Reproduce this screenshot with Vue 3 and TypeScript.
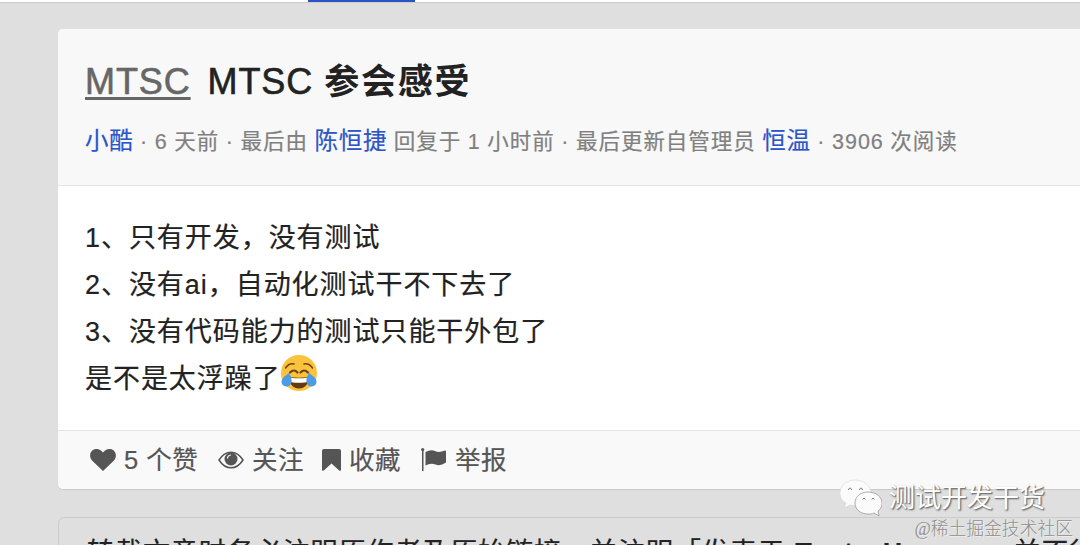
<script setup lang="ts">
const lines: string[] = ['1、只有开发，没有测试', '2、没有ai，自动化测试干不下去了', '3、没有代码能力的测试只能干外包了']
</script>

<template>
  <div class="page">
    <header class="nav"><span class="tab"></span></header>
    <main class="content">
      <article class="card">
        <div class="head">
          <h1><a class="node">MTSC</a><span class="name">MTSC</span><b>参会感受</b></h1>
          <div class="meta">
            <a>小酷</a> · 6 天前 · 最后由 <a>陈恒捷</a> 回复于 1 小时前 · 最后更新自管理员 <a>恒温</a> · 3906 次阅读
          </div>
        </div>
        <div class="body">
          <p v-for="line in lines" :key="line">{{ line }}</p>
          <p class="last">是不是太浮躁了<svg class="emoji" viewBox="0 0 36 36">
            <circle cx="18" cy="18" r="18" fill="#fbc33b" />
            <path d="M4.500 13Q8 8 13 9M23 9q5-1 8.500 4" fill="none" stroke="#70431a" stroke-width="1.500" stroke-linecap="round" />
            <path d="M9 17.500q4-4 7.500 0M19.500 17.500q3.500-4 7.500 0" fill="none" stroke="#70431a" stroke-width="2.200" stroke-linecap="round" />
            <path d="M8 21.500q10 2.500 20 0c0 6-3 12-10 12s-10-6-10-12z" fill="#633a12" />
            <path d="M9.500 22.500q8.500 1.700 17 0v3.500q0 1-1 1.200-7.500 1.200-15 0-1-.2-1-1.200z" fill="#fff" />
            <path d="M8 18c2 4 4 8 1.500 11.500-2 3-7 2.500-8.500-.5C-1 24 4 21 8 18zM28 18c-2 4-4 8-1.500 11.500 2 3 7 2.500 8.500-.5 2-5-3-8-7-11z" fill="#4a9be8" />
          </svg></p>
        </div>
        <footer class="actions">
          <span class="action like"><svg width="26" height="22" viewBox="0 0 26 22"><path d="M13 22 2 11.500C-3.500 4.500 4-3.500 11 1.500l2 2 2-2c7-5 14.500 3 9 10z" /></svg>5 个赞</span>
          <span class="action watch"><svg width="26" height="18" viewBox="0 0 26 18"><path d="M1 9Q6 1.200 13 1.200T25 9Q20 16.800 13 16.800T1 9z" fill="none" stroke="currentColor" stroke-width="1.500" /><circle cx="13" cy="8" r="6.500" /><path d="M9.500 7.500Q9.500 4.500 13 4" fill="none" stroke="#f9f9f9" stroke-width="1.200" /></svg>关注</span>
          <span class="action save"><svg width="19" height="22" viewBox="0 0 19 22"><path d="M2 0h15q2 0 2 2v18.500q0 2-1.800 1L9.500 14.500 1.800 21.500Q0 22.500 0 20.500V2Q0 0 2 0z" /></svg>收藏</span>
          <span class="action report"><svg width="26" height="23" viewBox="0 0 26 23"><path d="M1 1.500h1.500V23H1z" /><circle cx="1.700" cy="1.600" r="1.600" /><path d="M4.500 4Q10 1 14 3t10-.5q1 0 1 1V14.500q-6 4-10.500 2-5-2-10 1z" /></svg>举报</span>
        </footer>
      </article>
      <section class="notice">转载文章时务必注明原作者及原始链接，并注明「发表于 <b>TesterHome</b>」，并不得</section>
    </main>
    <div class="wechat">
      <svg width="42" height="38" viewBox="0 0 42 38">
        <path d="M15 1C6 1 0 7 0 14c0 5 2 8 6 10l-2 5 6-3c13 3 21-3 21-12C31 7 24 1 15 1z" fill="#fbfbfb" stroke="#ccc" stroke-width=".5" />
        <path d="M28 13c-8 0-13 5-13 11s5 11 13 11c2 0 4 0 6-1l5 3-1-5c3-2 4-5 4-8 0-6-6-11-14-11z" fill="#fbfbfb" stroke="#999" stroke-width=".8" />
        <path d="M8.300 11q1.700-4 3.400 0M19.300 11q1.700-4 3.400 0M22.700 20.500q1.300-3 2.600 0M31.700 20.500q1.300-3 2.600 0" fill="none" stroke="#777" stroke-width="1" />
      </svg>
      <span>测试开发干货</span>
    </div>
    <div class="credit">@稀土掘金技术社区</div>
  </div>
</template>

<style>
body { overflow: hidden; }
</style>

<style scoped>
.page { position: relative; height: 545px; overflow: hidden; background: #dfdfdf; font-family: "Liberation Sans", "Noto Sans CJK SC", sans-serif; color: #222; white-space: nowrap; }
.nav { height: 2px; background: #fff; box-shadow: 0 1px 1px #cbcbcb; padding-left: 308px; }
.tab { display: block; width: 107px; height: 2px; background: #2c52c4; }
.content { margin: 27px -110px 0 58px; }
.card { box-sizing: border-box; height: 460px; border-radius: 5px; background: #fff; overflow: hidden; box-shadow: 0 1px 1px #c8c8c8; }
.head { box-sizing: border-box; height: 157px; padding: 27px 27px 0; background: #f8f8f8; border-bottom: 1px solid #e4e4e4; }
h1 { display: flex; margin: 0; height: 50px; line-height: 52px; font-size: 36px; font-weight: 400; letter-spacing: .9px; -webkit-text-stroke: .6px; }
.node { color: #666; text-decoration: underline; text-decoration-thickness: 3px; text-underline-offset: 3px; margin-right: 17px; }
.name { margin-right: 11px; }
h1 b { font-size: 35px; font-weight: 700; letter-spacing: 1.8px; -webkit-text-stroke: 0; }
.meta { margin-top: 17px; height: 36px; line-height: 36px; font-size: 21.5px; letter-spacing: .97px; word-spacing: -.35px; color: #808080; -webkit-text-stroke: .2px; }
.meta a { font-size: 23.5px; letter-spacing: .7px; color: #2c55c8; }
.body { box-sizing: border-box; height: 244px; padding: 29px 27px 0; font-size: 27px; letter-spacing: .95px; line-height: 47px; -webkit-text-stroke: .2px; }
p { margin: 0; height: 47px; }
.last { display: flex; }
.emoji { width: 36px; height: 36px; margin-top: -1px; }
.actions { box-sizing: border-box; height: 59px; border-top: 1px solid #e4e4e4; background: #f9f9f9; padding-left: 32px; display: flex; align-items: center; color: #555; fill: currentColor; font-size: 25.5px; letter-spacing: .5px; line-height: 36px; padding-bottom: 1px; }
.action { display: flex; align-items: center; gap: 8px; -webkit-text-stroke: .2px; }
.like { width: 128px; }
.watch { width: 104px; }
.save { width: 99px; }
.notice { box-sizing: border-box; height: 60px; margin-top: 28px; padding: 15px 28px; border: 1px solid #cbcbcb; border-radius: 6px; font-size: 27px; letter-spacing: .95px; line-height: 40px; background: #dfdfdf; -webkit-text-stroke: .2px; }
.notice b { letter-spacing: 1.4px; margin: 0 8px 0 1px; }
.wechat { position: absolute; left: 840px; top: 478px; display: flex; align-items: center; gap: 7px; font-size: 26px; line-height: 40px; color: #fff; text-shadow: 1px 1px 1px #777, 1px 1px 2px #777; }
.credit { position: absolute; right: 7px; top: 517px; font: 300 17.8px/24px "Liberation Serif", "Noto Sans CJK SC", serif; color: #8f8f8f; text-shadow: 1px 1px 0 #eee; }
</style>
